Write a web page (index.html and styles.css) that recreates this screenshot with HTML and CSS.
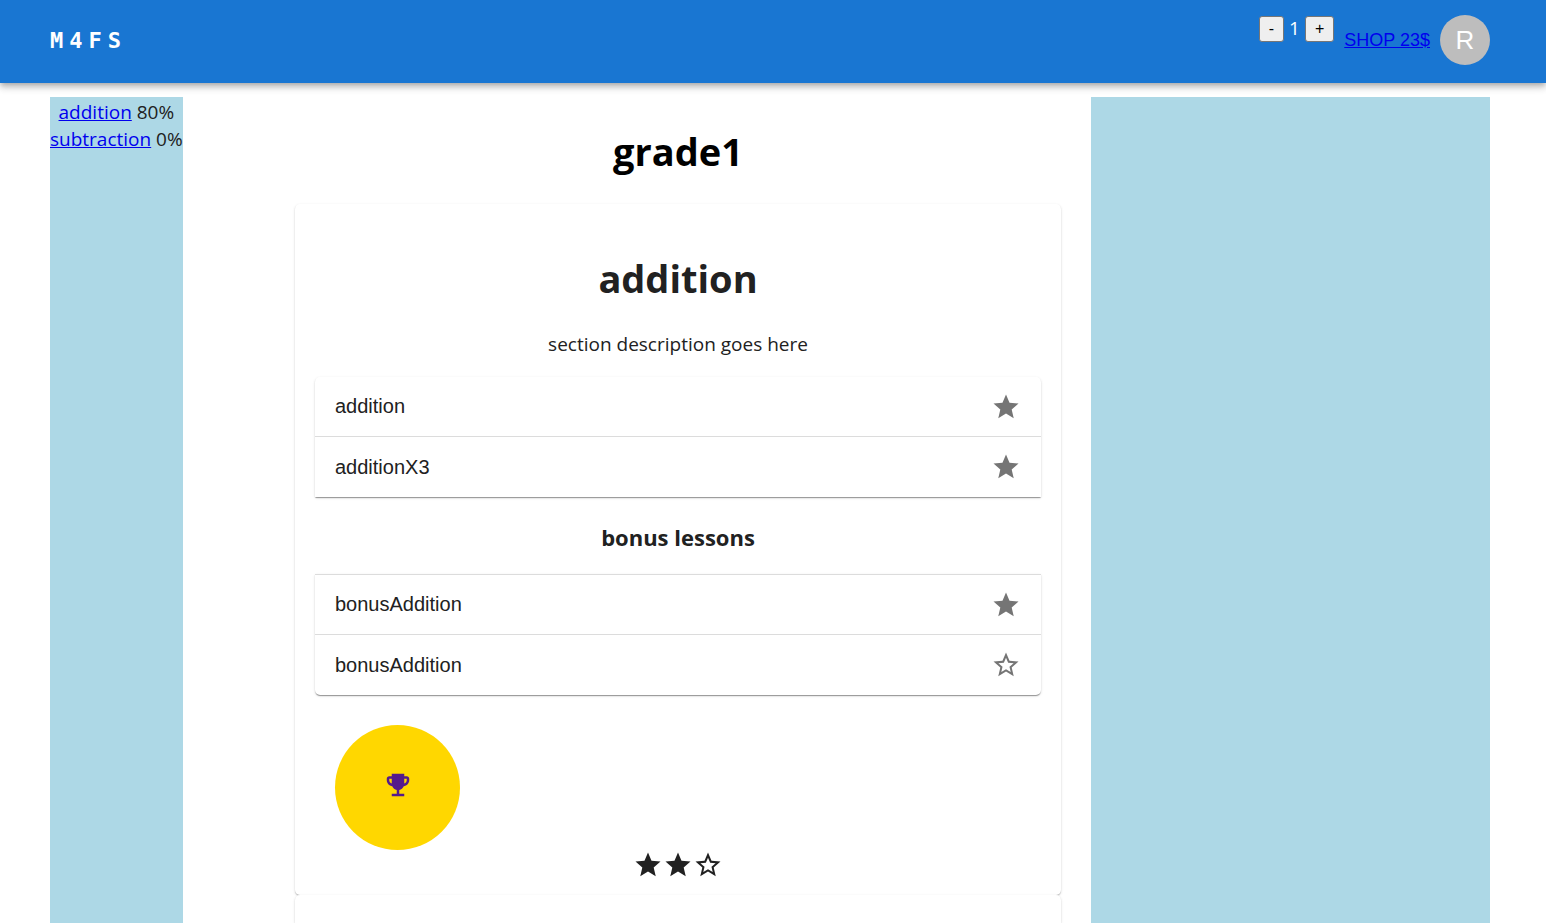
FILE: index.html
```html
<!DOCTYPE html>
<html lang="en">
<head>
<meta charset="utf-8">
<title>M4FS</title>
<meta name="viewport" content="width=device-width, initial-scale=1">
<link rel="stylesheet" href="styles.css">
</head>
<body>
<svg class="sprite" aria-hidden="true">
  <symbol id="star" viewBox="0 0 24 24"><path d="M12 17.27 18.18 21l-1.64-7.03L22 9.24l-7.19-.61L12 2 9.19 8.63 2 9.24l5.46 4.73L5.82 21z"/></symbol>
  <symbol id="star-outline" viewBox="0 0 24 24"><path d="m22 9.24-7.19-.62L12 2 9.19 8.63 2 9.24l5.46 4.73L5.82 21 12 17.27 18.18 21l-1.63-7.03L22 9.24zM12 15.4l-3.76 2.27 1-4.28-3.32-2.88 4.38-.38L12 6.1l1.71 4.04 4.38.38-3.32 2.88 1 4.28L12 15.4z"/></symbol>
  <symbol id="trophy" viewBox="0 0 24 24"><path d="M19 5h-2V3H7v2H5c-1.1 0-2 .9-2 2v1c0 2.55 1.92 4.63 4.39 4.94.63 1.5 1.98 2.63 3.61 2.96V19H7v2h10v-2h-4v-3.1c1.63-.33 2.98-1.46 3.61-2.96C19.08 12.63 21 10.55 21 8V7c0-1.1-.9-2-2-2zM5 8V7h2v3.82C5.84 10.4 5 9.3 5 8zm14 0c0 1.3-.84 2.4-2 2.82V7h2v1z"/></symbol>
</svg>

<header class="app-bar">
  <div class="brand">M4FS</div>
  <div class="tools">
    <div class="counter">
      <button type="button" aria-label="decrease">-</button>
      <span>1</span>
      <button type="button" aria-label="increase">+</button>
    </div>
    <a class="shop" href="#shop">SHOP 23$</a>
    <div class="avatar">R</div>
  </div>
</header>

<div class="layout">
  <nav class="progress">
    <div><a href="#addition">addition</a> 80%</div>
    <div><a href="#subtraction">subtraction</a> 0%</div>
  </nav>

  <main class="content">
    <h1 class="title">grade1</h1>
    <section class="card" id="addition">
      <h1 class="title">addition</h1>
      <p class="description">section description goes here</p>
      <ul class="lessons lessons-main">
        <li>addition <svg class="icon"><use href="#star"/></svg></li>
        <li>additionX3 <svg class="icon"><use href="#star"/></svg></li>
      </ul>
      <h3 class="subtitle">bonus lessons</h3>
      <ul class="lessons lessons-bonus">
        <li>bonusAddition <svg class="icon"><use href="#star"/></svg></li>
        <li>bonusAddition <svg class="icon"><use href="#star-outline"/></svg></li>
      </ul>
      <a class="trophy" href="#test" aria-label="section test"><svg class="icon"><use href="#trophy"/></svg></a>
      <div class="rating">
        <svg class="icon"><use href="#star"/></svg>
        <svg class="icon"><use href="#star"/></svg>
        <svg class="icon"><use href="#star-outline"/></svg>
      </div>
    </section>
    <section class="card card-next" id="subtraction"></section>
  </main>

  <aside class="side"></aside>
</div>
</body>
</html>
```

FILE: styles.css
```css
* {
  box-sizing: border-box;
}

body {
  margin: 0;
  min-height: 100vh;
  display: flex;
  flex-direction: column;
  background: #fff;
  color: #212121;
  font-family: "Segoe UI", "Open Sans", sans-serif;
  font-size: 19px;
  line-height: 27px;
}

a {
  color: #0000ee;
}

.sprite {
  display: none;
}

.icon {
  width: 30px;
  height: 30px;
  fill: currentColor;
  display: block;
}

.app-bar {
  display: flex;
  justify-content: space-between;
  padding: 15px 56px 18px 50px;
  background: #1976d2;
  color: #fff;
  box-shadow: 0 2px 5px -1px rgba(0, 0, 0, 0.2), 0 5px 6px rgba(0, 0, 0, 0.14), 0 1px 12px rgba(0, 0, 0, 0.12);
}

.brand {
  align-self: center;
  font-family: "DejaVu Sans Mono", monospace;
  font-size: 22px;
  font-weight: 700;
  letter-spacing: 6px;
}

.tools {
  display: flex;
  align-items: center;
  gap: 10px;
}

.counter {
  display: flex;
  align-self: flex-start;
  align-items: center;
  gap: 5px;
}

.counter button {
  padding: 1px 9px;
  border: 1px solid #767676;
  border-radius: 3px;
  background: #efefef;
  color: #000;
  font-family: "Liberation Sans", sans-serif;
  font-size: 16px;
  line-height: 22px;
}

.shop {
  font-family: "Liberation Sans", sans-serif;
  font-size: 18px;
}

.avatar {
  display: grid;
  place-items: center;
  width: 50px;
  height: 50px;
  border-radius: 50%;
  background: #bdbdbd;
  font-family: "Liberation Sans", sans-serif;
  font-size: 26px;
}

.layout {
  flex: 1;
  display: grid;
  grid-template-columns: 215fr 826fr 399fr;
  padding: 14px 56px 0 50px;
}

.progress {
  justify-self: start;
  padding-top: 2px;
  background: #add8e6;
  text-align: center;
}

.content {
  display: flex;
  flex-direction: column;
  padding: 0 30px;
}

.side {
  background: #add8e6;
}

.title {
  margin: 28px 0 26px;
  font-size: 38px;
  line-height: 53px;
  text-align: center;
}

.content > .title {
  color: #000;
}

.card {
  padding: 20px 20px 15px;
  border-radius: 5px;
  box-shadow: 0 1px 1px rgba(0, 0, 0, 0.2), 0 1px 3px rgba(0, 0, 0, 0.12);
  background: #fff;
}

.card-next {
  flex: 1;
  padding: 0;
  border-radius: 5px 5px 0 0;
}

.description {
  margin: 0 0 19px;
  text-align: center;
}

.lessons {
  margin: 0;
  padding: 0;
  list-style: none;
  font-family: "Liberation Sans", sans-serif;
  font-size: 20px;
  box-shadow: 0 2px 1px -1px rgba(0, 0, 0, 0.2), 0 1px 1px rgba(0, 0, 0, 0.2), 0 1px 3px rgba(0, 0, 0, 0.12);
}

.lessons li {
  display: flex;
  justify-content: space-between;
  align-items: center;
  height: 60px;
  padding: 0 20px;
}

.lessons li:first-child {
  border-bottom: 1px solid #dcdcdc;
}

.lessons .icon {
  color: #757575;
}

.lessons-main {
  border-radius: 5px 5px 0 0;
}

.lessons-bonus {
  border-top: 1px solid #dcdcdc;
  border-radius: 0 0 5px 5px;
}

.subtitle {
  margin: 25px 0 22px;
  font-size: 22px;
  line-height: 30px;
  text-align: center;
}

.trophy {
  display: grid;
  place-items: center;
  width: 125px;
  height: 125px;
  margin: 30px 20px 0;
  padding-bottom: 5px;
  border-radius: 50%;
  background: #ffd700;
  color: #551a8b;
}

.rating {
  display: flex;
  justify-content: center;
}
```
